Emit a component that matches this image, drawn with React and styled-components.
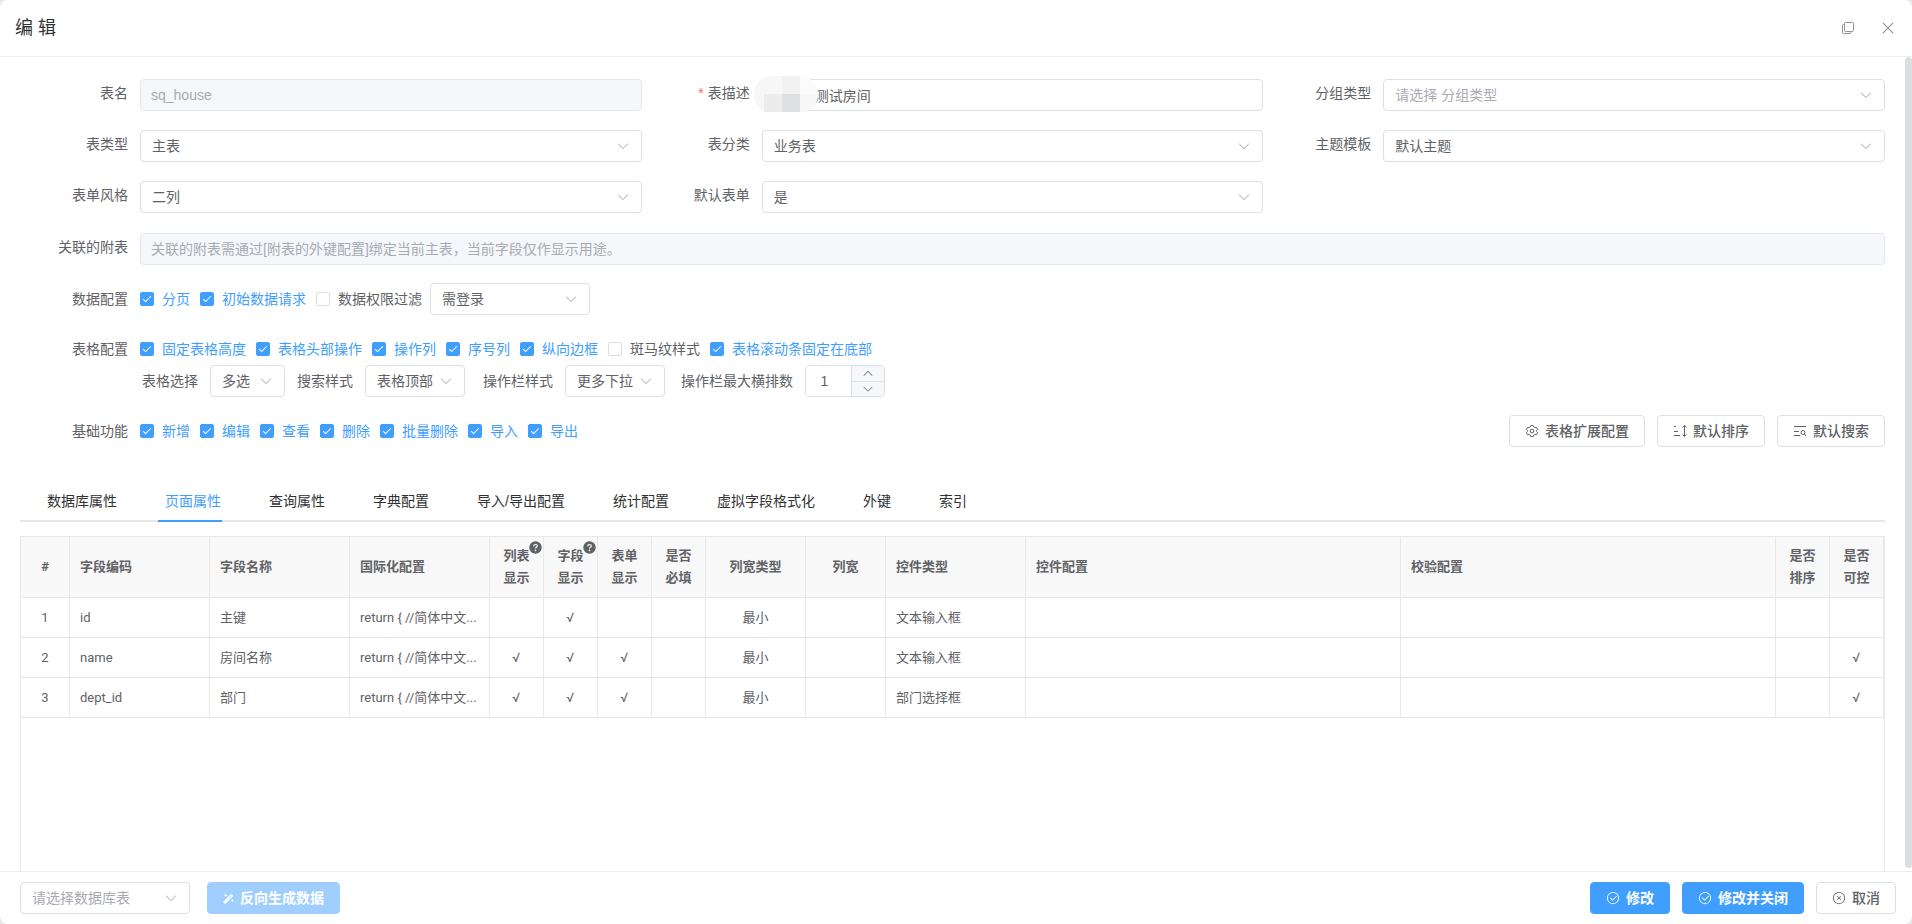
import React from "react";
import styled, { createGlobalStyle, css } from "styled-components";

const GlobalStyle = createGlobalStyle`
  *, *::before, *::after {
    box-sizing: border-box;
  }

  body {
    margin: 0;
    background-color: #e9e9ea;
    color: #606266;
    font-family: "Liberation Sans", "Noto Sans CJK SC", sans-serif;
    font-size: 14px;
  }

  button, input, select {
    font-family: inherit;
    font-size: 14px;
    color: inherit;
  }
`;

const Dialog = styled.div`
  position: relative;
  display: flex;
  flex-direction: column;
  height: 100vh;
  background-color: white;
  border-radius: 8px;
  overflow: hidden;
`;

const Header = styled.header`
  flex: none;
  display: flex;
  align-items: center;
  height: 57px;
  padding: 0 15px;
  border-bottom: 1px solid #ebeef0;
`;

const Title = styled.h1`
  flex: 1;
  margin: 0;
  color: #303133;
  font-size: 18px;
  font-weight: 400;
  line-height: 24px;
`;

const IconButton = styled.button`
  display: flex;
  margin-left: 25px;
  padding: 0;
  border: none;
  background: none;
  color: #909399;
  cursor: pointer;
`;

const Body = styled.main`
  flex: 1;
  min-height: 0;
  display: flex;
  flex-direction: column;
  padding: 22px 27px 0 20px;
  overflow: hidden;
`;

const ScrollThumb = styled.div`
  position: absolute;
  top: 57px;
  right: 0;
  bottom: 56px;
  width: 7px;
  border-radius: 4px;
  background-color: #dddee0;
`;

const FormGrid = styled.div`
  display: grid;
  grid-template-columns: repeat(3, 1fr);
  row-gap: 19px;
  margin-bottom: 20px;
`;

const FormItem = styled.div`
  display: flex;
  align-items: flex-start;
  margin-bottom: ${(props) => (props.$spaced ? "18px" : "0")};
`;

const Label = styled.label`
  flex: none;
  width: ${(props) => props.$width || "120px"};
  padding-right: 12px;
  line-height: ${(props) => (props.$inline ? "32px" : "28px")};
  text-align: right;
  white-space: nowrap;
`;

const Required = styled.span`
  margin-right: 4px;
  color: #f56c6c;
`;

const Content = styled.div`
  position: relative;
  flex: 1;
  min-width: 0;
`;

const Line = styled.div`
  display: flex;
  align-items: center;
  height: 32px;
`;

const field = css`
  width: 100%;
  height: 32px;
  padding: 0 11px;
  border: 1px solid #dcdfe6;
  border-radius: 4px;
  background-color: white;
  outline: none;
`;

const Input = styled.input`
  ${field}
  display: block;
  padding-left: ${(props) => (props.$masked ? "52px" : "10px")};

  &:disabled {
    border-color: #e4e7ed;
    background-color: #f5f7fa;
    color: #a8abb2;
  }

  &::placeholder {
    color: #a8abb2;
  }
`;

const Mask = styled.svg`
  position: absolute;
  top: -3px;
  left: -8px;
`;

const SelectWrap = styled.div`
  position: relative;
  flex: none;
  width: ${(props) => props.$width || "100%"};

  svg {
    position: absolute;
    top: 9px;
    right: 12px;
    color: #a8abb2;
    pointer-events: none;
  }
`;

const SelectBox = styled.select`
  ${field}
  display: block;
  appearance: none;
  color: ${(props) => (props.$empty ? "#a8abb2" : "#606266")};
`;

const CheckLabel = styled.label`
  display: flex;
  align-items: center;
  gap: 8px;
  margin-right: ${(props) => (props.$last ? "8px" : "10px")};
  color: ${(props) => (props.$checked ? "#409eff" : "#606266")};
  line-height: 14px;
  white-space: nowrap;
`;

const CheckInput = styled.input`
  position: relative;
  width: 14px;
  height: 14px;
  margin: 0;
  border: 1px solid #dcdfe6;
  border-radius: 2px;
  background-color: white;
  appearance: none;

  &:checked {
    border-color: #409eff;
    background-color: #409eff;
  }

  &:checked::after {
    content: "";
    position: absolute;
    top: 1px;
    left: 4px;
    width: 4px;
    height: 8px;
    border: 1px solid white;
    border-top: 0;
    border-left: 0;
    transform: rotate(45deg);
  }
`;

const NumberWrap = styled.div`
  display: flex;
  width: 80px;
  height: 32px;
  border: 1px solid #dcdfe6;
  border-radius: 4px;
  overflow: hidden;
`;

const NumberInput = styled.input`
  flex: 1;
  min-width: 0;
  padding: 0 8px 0 0;
  border: none;
  text-align: center;
  outline: none;
`;

const Stepper = styled.div`
  display: flex;
  flex-direction: column;
  width: 33px;
  border-left: 1px solid #dcdfe6;
`;

const StepButton = styled.button`
  flex: 1;
  display: flex;
  align-items: center;
  justify-content: center;
  padding: 0;
  border: none;
  background-color: #f5f7fa;

  & + & {
    border-top: 1px solid #dcdfe6;
  }
`;

const buttonKinds = {
  plain: css`
    border-color: #dcdfe6;
    background-color: white;
    color: #606266;
  `,
  primary: css`
    border-color: #409eff;
    background-color: #409eff;
    color: white;
    font-weight: 700;
  `,
  disabled: css`
    border-color: #a0cfff;
    background-color: #a0cfff;
    color: white;
    font-weight: 700;
  `,
};

const Button = styled.button`
  display: inline-flex;
  align-items: center;
  justify-content: center;
  gap: 6px;
  height: 32px;
  padding: 0 15px;
  border: 1px solid;
  border-radius: 4px;
  font-weight: 500;
  line-height: 14px;
  white-space: nowrap;
  ${(props) => buttonKinds[props.$kind || "plain"]}
`;

const ButtonGroup = styled.div`
  display: flex;
  gap: 12px;
  margin-left: auto;
`;

const Tabs = styled.nav`
  flex: none;
  display: flex;
  gap: 48px;
  height: 40px;
  margin: 17px 0 14px;
  padding-left: 27px;
  border-bottom: 2px solid #e4e7ed;
`;

const Tab = styled.button`
  position: relative;
  padding: 0;
  border: none;
  background: none;
  color: ${(props) => (props.$active ? "#409eff" : "#303133")};
  line-height: 38px;

  &::after {
    content: "";
    display: ${(props) => (props.$active ? "block" : "none")};
    position: absolute;
    right: -1px;
    bottom: -2px;
    left: -7px;
    height: 2px;
    background-color: #409eff;
  }
`;

const TableBox = styled.div`
  flex: 1;
  min-height: 0;
  border: 1px solid #e8e8e8;
  border-bottom: none;
  overflow: hidden;
`;

const Table = styled.table`
  width: 100%;
  border-collapse: separate;
  border-spacing: 0;
  table-layout: fixed;
  font-family: Roboto, "Noto Sans CJK SC", sans-serif;
  font-size: 13px;
  line-height: 22px;
`;

const cell = css`
  padding: 0 10px;
  border-right: 1px solid #e8e8e8;
  border-bottom: 1px solid #e8e8e8;
  text-align: ${(props) => (props.$center ? "center" : "left")};
  white-space: nowrap;
`;

const Th = styled.th`
  ${cell}
  height: 61px;
  background-color: #f8f8f8;
  font-weight: 700;
`;

const Td = styled.td`
  ${cell}
  height: 40px;
`;

const HeadLine = styled.span`
  position: relative;
  display: block;
`;

const Hint = styled.svg`
  position: absolute;
  top: -4px;
  left: calc(50% + 12px);
`;

const Footer = styled.footer`
  flex: none;
  display: flex;
  align-items: center;
  gap: 17px;
  padding: 10px 16px 10px 20px;
  border-top: 1px solid #ebeef0;
`;

const Glyph = ({ size = 14, children }) => (
  <svg width={size} height={size} viewBox="0 0 1024 1024" fill="currentColor" aria-hidden="true">
    {children}
  </svg>
);

const ArrowDown = ({ size }) => (
  <Glyph size={size}>
    <path d="M831.872 340.864 512 652.672 192.128 340.864a30.592 30.592 0 0 0-42.752 0 29.12 29.12 0 0 0 0 41.6L489.664 714.24a32 32 0 0 0 44.672 0l340.288-331.712a29.12 29.12 0 0 0 0-41.728 30.592 30.592 0 0 0-42.752 0z" />
  </Glyph>
);

const ArrowUp = ({ size }) => (
  <Glyph size={size}>
    <path d="m488.832 344.32-339.84 356.672a32 32 0 0 0 0 44.16l.384.384a29.44 29.44 0 0 0 42.688 0l320-335.872 319.872 335.872a29.44 29.44 0 0 0 42.688 0l.384-.384a32 32 0 0 0 0-44.16L535.168 344.32a32 32 0 0 0-46.336 0z" />
  </Glyph>
);

const ring =
  "M512 896a384 384 0 1 0 0-768 384 384 0 0 0 0 768m0 64a448 448 0 1 1 0-896 448 448 0 0 1 0 896";

const CircleCheck = () => (
  <Glyph>
    <path d={ring} />
    <path d="M745.344 361.344a32 32 0 0 1 45.312 45.312l-288 288a32 32 0 0 1-45.312 0l-160-160a32 32 0 1 1 45.312-45.312L480 626.752z" />
  </Glyph>
);

const CircleClose = () => (
  <Glyph>
    <path d="m466.752 512-90.496-90.496a32 32 0 0 1 45.248-45.248L512 466.752l90.496-90.496a32 32 0 0 1 45.248 45.248L557.248 512l90.496 90.496a32 32 0 1 1-45.248 45.248L512 557.248l-90.496 90.496a32 32 0 0 1-45.248-45.248z" />
    <path d={ring} />
  </Glyph>
);

const Close = () => (
  <Glyph size={18}>
    <path d="M764.288 214.592 512 466.88 259.712 214.592a31.936 31.936 0 0 0-45.12 45.12L466.752 512 214.528 764.224a31.936 31.936 0 1 0 45.12 45.184L512 557.184l252.288 252.288a31.936 31.936 0 0 0 45.12-45.12L557.12 512.064l252.288-252.352a31.936 31.936 0 1 0-45.12-45.184z" />
  </Glyph>
);

const LineIcon = ({ box = 14, children }) => (
  <svg width={box} height={box} viewBox={`0 0 ${box} ${box}`} fill="none" stroke="currentColor" aria-hidden="true">
    {children}
  </svg>
);

const Copy = () => (
  <LineIcon box={12}>
    <rect x="2.500" y="0.500" width="9" height="9" rx="1" />
    <path d="M2.500 2.500h-1a1 1 0 0 0-1 1v7a1 1 0 0 0 1 1h6.500a1 1 0 0 0 1-1v-1" />
  </LineIcon>
);

const Gear = () => (
  <LineIcon>
    <path
      strokeLinejoin="round"
      d="M5.800 1.500h2.400l.5 1.400 1.200.7 1.500-.3 1.200 2-1 1.100v1.300l1 1.100-1.200 2-1.500-.3-1.200.7-.5 1.400H5.800l-.5-1.400-1.200-.7-1.500.3-1.200-2 1-1.100V6.400l-1-1.100 1.200-2 1.500.3 1.200-.7z"
    />
    <circle cx="7" cy="7" r="1.800" />
  </LineIcon>
);

const SortIcon = () => (
  <LineIcon>
    <path d="M1 2.500h2M1 7.500h4M1 11.500h6M11.500 1.500v11M9.500 3.500l2-2 2 2M9.500 10.500l2 2 2-2" />
  </LineIcon>
);

const SearchIcon = () => (
  <LineIcon>
    <path d="M1 2.500h12M1 7.500h5M1 11.500h6M11.500 10l1.500 2" />
    <circle cx="10" cy="8.500" r="2" />
  </LineIcon>
);

const Wand = () => (
  <svg width="11" height="11" viewBox="0 0 12 12" fill="currentColor" aria-hidden="true">
    <path d="M.8 9 8 1.800a1.300 1.300 0 0 1 1.900 0l.4.4a1.300 1.300 0 0 1 0 1.900L3.100 11.300a1.300 1.300 0 0 1-1.900 0l-.4-.4a1.300 1.300 0 0 1 0-1.900z" />
    <path d="M3 .5l.6 1.400L5 2.500l-1.400.6L3 4.500l-.6-1.400L1 2.500l1.400-.6zM10.300 6.500l.5 1.200 1.200.5-1.200.5-.5 1.200-.5-1.200-1.200-.5 1.200-.5z" />
    <path d="M7 5.200 9 3.200" stroke="#a0cfff" />
  </svg>
);

const QuestionHint = () => (
  <Hint width="13" height="13" viewBox="0 0 13 13" aria-hidden="true">
    <circle cx="6.500" cy="6.500" r="6.200" fill="#606266" />
    <path d="M4.700 5.200c0-1 .8-1.700 1.800-1.700s1.800.7 1.800 1.600c0 1.200-1.800 1.300-1.800 2.500" fill="none" stroke="#f8f8f8" strokeWidth="1.200" />
    <circle cx="6.500" cy="9.400" r="0.800" fill="#f8f8f8" />
  </Hint>
);

const Select = ({ id, value, width, empty, label }) => (
  <SelectWrap $width={width}>
    <SelectBox id={id} $empty={empty} aria-label={label} defaultValue={value}>
      <option>{value}</option>
    </SelectBox>
    <ArrowDown />
  </SelectWrap>
);

const SelectItem = ({ id, label, value, empty }) => (
  <FormItem>
    <Label htmlFor={id}>{label}</Label>
    <Content>
      <Select id={id} value={value} empty={empty} />
    </Content>
  </FormItem>
);

const Checks = ({ items }) =>
  items.map(([text, checked = true], i) => (
    <CheckLabel key={text} $checked={checked} $last={i === items.length - 1}>
      <CheckInput type="checkbox" defaultChecked={checked} />
      {text}
    </CheckLabel>
  ));

const tabs = [
  "数据库属性",
  "页面属性",
  "查询属性",
  "字典配置",
  "导入/导出配置",
  "统计配置",
  "虚拟字段格式化",
  "外键",
  "索引",
];

const columns = [
  { title: ["#"], width: 49, center: true },
  { title: ["字段编码"], width: 140 },
  { title: ["字段名称"], width: 140 },
  { title: ["国际化配置"], width: 140 },
  { title: ["列表", "显示"], width: 54, center: true, hint: true },
  { title: ["字段", "显示"], width: 54, center: true, hint: true },
  { title: ["表单", "显示"], width: 54, center: true },
  { title: ["是否", "必填"], width: 54, center: true },
  { title: ["列宽类型"], width: 100, center: true },
  { title: ["列宽"], width: 80, center: true },
  { title: ["控件类型"], width: 140 },
  { title: ["控件配置"] },
  { title: ["校验配置"] },
  { title: ["是否", "排序"], width: 54, center: true },
  { title: ["是否", "可控"], width: 54, center: true },
];

const locale = "return { //简体中文...";

const rows = [
  ["1", "id", "主键", locale, "", "√", "", "", "最小", "", "文本输入框", "", "", "", ""],
  ["2", "name", "房间名称", locale, "√", "√", "√", "", "最小", "", "文本输入框", "", "", "", "√"],
  ["3", "dept_id", "部门", locale, "√", "√", "√", "", "最小", "", "部门选择框", "", "", "", "√"],
];

const FieldTable = () => (
  <TableBox>
    <Table>
      <colgroup>
        {columns.map((column, i) => (
          <col key={i} width={column.width} />
        ))}
      </colgroup>
      <thead>
        <tr>
          {columns.map((column, i) => (
            <Th key={i} $center={column.center}>
              {column.title.map((line, n) => (
                <HeadLine key={line}>
                  {line}
                  {column.hint && n === 0 && <QuestionHint />}
                </HeadLine>
              ))}
            </Th>
          ))}
        </tr>
      </thead>
      <tbody>
        {rows.map((row) => (
          <tr key={row[0]}>
            {row.map((text, i) => (
              <Td key={i} $center={columns[i].center}>
                {text}
              </Td>
            ))}
          </tr>
        ))}
      </tbody>
    </Table>
  </TableBox>
);

const App = () => {
  return (
    <>
      <GlobalStyle />
      <Dialog role="dialog">
        <Header>
          <Title>编 辑</Title>
          <IconButton type="button" aria-label="最大化">
            <Copy />
          </IconButton>
          <IconButton type="button" aria-label="关闭">
            <Close />
          </IconButton>
        </Header>

        <Body>
          <FormGrid>
            <FormItem>
              <Label htmlFor="name">表名</Label>
              <Content>
                <Input id="name" defaultValue="sq_house" disabled />
              </Content>
            </FormItem>
            <FormItem>
              <Label htmlFor="desc">
                <Required>*</Required>
                表描述
              </Label>
              <Content>
                <Input id="desc" defaultValue="测试房间" $masked />
                <Mask width="64" height="36" viewBox="0 0 64 36" aria-hidden="true">
                  <path d="M18 0h28a18 18 0 0 1 18 18 18 18 0 0 1-12 18H12A18 18 0 0 1 0 18 18 18 0 0 1 18 0z" fill="#f7f7f7" />
                  <path d="M28 0h18v18H28z" fill="#f2f2f2" />
                  <path d="M46 0a18 18 0 0 1 18 18H46z" fill="#fcfcfc" />
                  <path d="M10 18h18v18H10z" fill="#ececec" />
                  <path d="M28 18h18v18H28z" fill="#dfe0e2" />
                </Mask>
              </Content>
            </FormItem>
            <SelectItem id="group" label="分组类型" value="请选择 分组类型" empty />
            <SelectItem id="type" label="表类型" value="主表" />
            <SelectItem id="category" label="表分类" value="业务表" />
            <SelectItem id="theme" label="主题模板" value="默认主题" />
            <SelectItem id="style" label="表单风格" value="二列" />
            <SelectItem id="form" label="默认表单" value="是" />
          </FormGrid>

          <FormItem $spaced>
            <Label htmlFor="sub">关联的附表</Label>
            <Content>
              <Input
                id="sub"
                placeholder="关联的附表需通过[附表的外键配置]绑定当前主表，当前字段仅作显示用途。"
                disabled
              />
            </Content>
          </FormItem>

          <FormItem $spaced>
            <Label as="span" $inline>数据配置</Label>
            <Line>
              <Checks items={[["分页"], ["初始数据请求"], ["数据权限过滤", false]]} />
              <Select label="数据权限" value="需登录" width="160px" />
            </Line>
          </FormItem>

          <FormItem $spaced>
            <Label as="span" $inline>表格配置</Label>
            <Content>
              <Line>
                <Checks
                  items={[
                    ["固定表格高度"],
                    ["表格头部操作"],
                    ["操作列"],
                    ["序号列"],
                    ["纵向边框"],
                    ["斑马纹样式", false],
                    ["表格滚动条固定在底部"],
                  ]}
                />
              </Line>
              <Line>
                <Label htmlFor="pick" $width="70px" $inline>表格选择</Label>
                <Select id="pick" value="多选" width="75px" />
                <Label htmlFor="search" $width="80px" $inline>搜索样式</Label>
                <Select id="search" value="表格顶部" width="100px" />
                <Label htmlFor="action" $width="100px" $inline>操作栏样式</Label>
                <Select id="action" value="更多下拉" width="100px" />
                <Label htmlFor="max" $width="140px" $inline>操作栏最大横排数</Label>
                <NumberWrap>
                  <NumberInput id="max" defaultValue="1" />
                  <Stepper>
                    <StepButton type="button" aria-label="增加">
                      <ArrowUp size={12} />
                    </StepButton>
                    <StepButton type="button" aria-label="减少">
                      <ArrowDown size={12} />
                    </StepButton>
                  </Stepper>
                </NumberWrap>
              </Line>
            </Content>
          </FormItem>

          <FormItem $spaced>
            <Label as="span" $inline>基础功能</Label>
            <Line>
              <Checks
                items={[["新增"], ["编辑"], ["查看"], ["删除"], ["批量删除"], ["导入"], ["导出"]]}
              />
            </Line>
            <ButtonGroup>
              <Button type="button">
                <Gear />
                表格扩展配置
              </Button>
              <Button type="button">
                <SortIcon />
                默认排序
              </Button>
              <Button type="button">
                <SearchIcon />
                默认搜索
              </Button>
            </ButtonGroup>
          </FormItem>

          <Tabs>
            {tabs.map((tab) => (
              <Tab key={tab} type="button" $active={tab === "页面属性"}>
                {tab}
              </Tab>
            ))}
          </Tabs>

          <FieldTable />
        </Body>
        <ScrollThumb />

        <Footer>
          <Select label="数据库表" value="请选择数据库表" width="170px" empty />
          <Button type="button" $kind="disabled" disabled>
            <Wand />
            反向生成数据
          </Button>
          <ButtonGroup>
            <Button type="button" $kind="primary">
              <CircleCheck />
              修改
            </Button>
            <Button type="button" $kind="primary">
              <CircleCheck />
              修改并关闭
            </Button>
            <Button type="button">
              <CircleClose />
              取消
            </Button>
          </ButtonGroup>
        </Footer>
      </Dialog>
    </>
  );
};

export default App;
